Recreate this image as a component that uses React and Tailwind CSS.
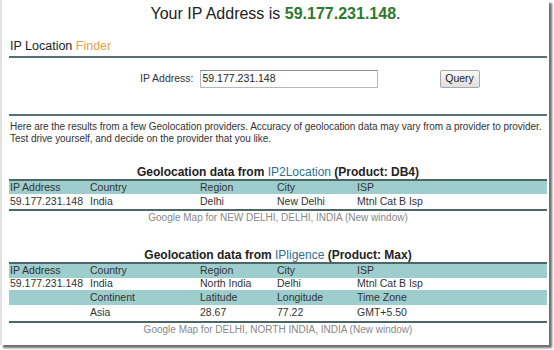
const font = { fontFamily: '"Liberation Sans", Arial, sans-serif' }

function Cols({ cells, className = '' }) {
  return (
    <div className={`flex items-center ${className}`}>
      <div className="w-[81px] pl-[1px]">{cells[0]}</div>
      <div className="w-[110px]">{cells[1]}</div>
      <div className="w-[77px]">{cells[2]}</div>
      <div className="w-[80px]">{cells[3]}</div>
      <div className="flex-1">{cells[4]}</div>
    </div>
  )
}

function Provider({ name, product, rows, map }) {
  return (
    <div>
      <div className="text-center text-[12px] font-bold text-[#222] leading-[12px] h-[13px]">
        Geolocation data from <span className="font-normal text-[#2f6f8f]">{name}</span> (Product: {product})
      </div>
      <div className="border-t-2 border-b-2 border-[#4d6666] text-[10.5px] text-[#333]">
        {rows.map((r, i) => (
          <Cols
            key={i}
            cells={r.cells}
            className={r.head ? `bg-[#9dcdcd] ${r.h}` : `bg-white ${r.h}`}
          />
        ))}
      </div>
      <div className="text-center text-[10px] text-[#888] leading-[14px]">{map}</div>
    </div>
  )
}

export default function App() {
  return (
    <div className="w-[554px] h-[350px] bg-white overflow-hidden" style={font}>
      <div className="w-[549px] h-[345px] border-l-2 border-[#e2e2e2] shadow-[3px_3px_2px_#6f6f6f] bg-white">
        <div className="pt-[4px] text-center text-[16px] leading-[20px] text-[#222]">
          Your IP Address is <span className="font-bold text-[#2b7a2b]">59.177.231.148</span>.
        </div>
        <div className="ml-[7px] mr-[2px]">
          <div className="mt-[15px] pl-[1px] text-[12.5px] leading-[14px] text-[#222]">
            IP Location <span className="text-[#e3a24a]">Finder</span>
          </div>
          <div className="mt-[3px] h-[2px] bg-[#5a7070]" />
          <div className="flex items-start h-[56px] pt-[12px]">
            <span className="ml-[131px] h-[18px] flex items-center text-[10.5px] text-[#333]">IP Address:</span>
            <div className="ml-[6px] w-[178px] h-[18px] border border-[#b8b8b8] border-t-[#8a8a8a] flex items-center pl-[2px] text-[10.5px] text-[#222]">
              59.177.231.148
            </div>
            <div className="ml-[62px] w-[40px] h-[18px] border border-[#a8a8a8] rounded-[2px] bg-gradient-to-b from-[#fafafa] to-[#dedede] flex items-center justify-center text-[10.5px] text-[#222]">
              Query
            </div>
          </div>
          <div className="h-[2px] bg-[#5a7070]" />
          <div className="mt-[5px] pl-[1px] text-[10px] tracking-[-0.04px] leading-[12px] text-[#333]">
            Here are the results from a few Geolocation providers. Accuracy of geolocation data may vary from a provider to provider. Test drive yourself, and decide on the provider that you like.
          </div>
          <div className="mt-[21px]">
            <Provider
              name="IP2Location"
              product="DB4"
              rows={[
                { head: true, h: 'h-[13px]', cells: ['IP Address', 'Country', 'Region', 'City', 'ISP'] },
                { h: 'h-[15px]', cells: ['59.177.231.148', 'India', 'Delhi', 'New Delhi', 'Mtnl Cat B Isp'] },
              ]}
              map="Google Map for NEW DELHI, DELHI, INDIA (New window)"
            />
          </div>
          <div className="mt-[24px]">
            <Provider
              name="IPligence"
              product="Max"
              rows={[
                { head: true, h: 'h-[14px]', cells: ['IP Address', 'Country', 'Region', 'City', 'ISP'] },
                { h: 'h-[12px]', cells: ['59.177.231.148', 'India', 'North India', 'Delhi', 'Mtnl Cat B Isp'] },
                { head: true, h: 'h-[15px]', cells: ['', 'Continent', 'Latitude', 'Longitude', 'Time Zone'] },
                { h: 'h-[16px]', cells: ['', 'Asia', '28.67', '77.22', 'GMT+5.50'] },
              ]}
              map="Google Map for DELHI, NORTH INDIA, INDIA (New window)"
            />
          </div>
        </div>
      </div>
    </div>
  )
}
